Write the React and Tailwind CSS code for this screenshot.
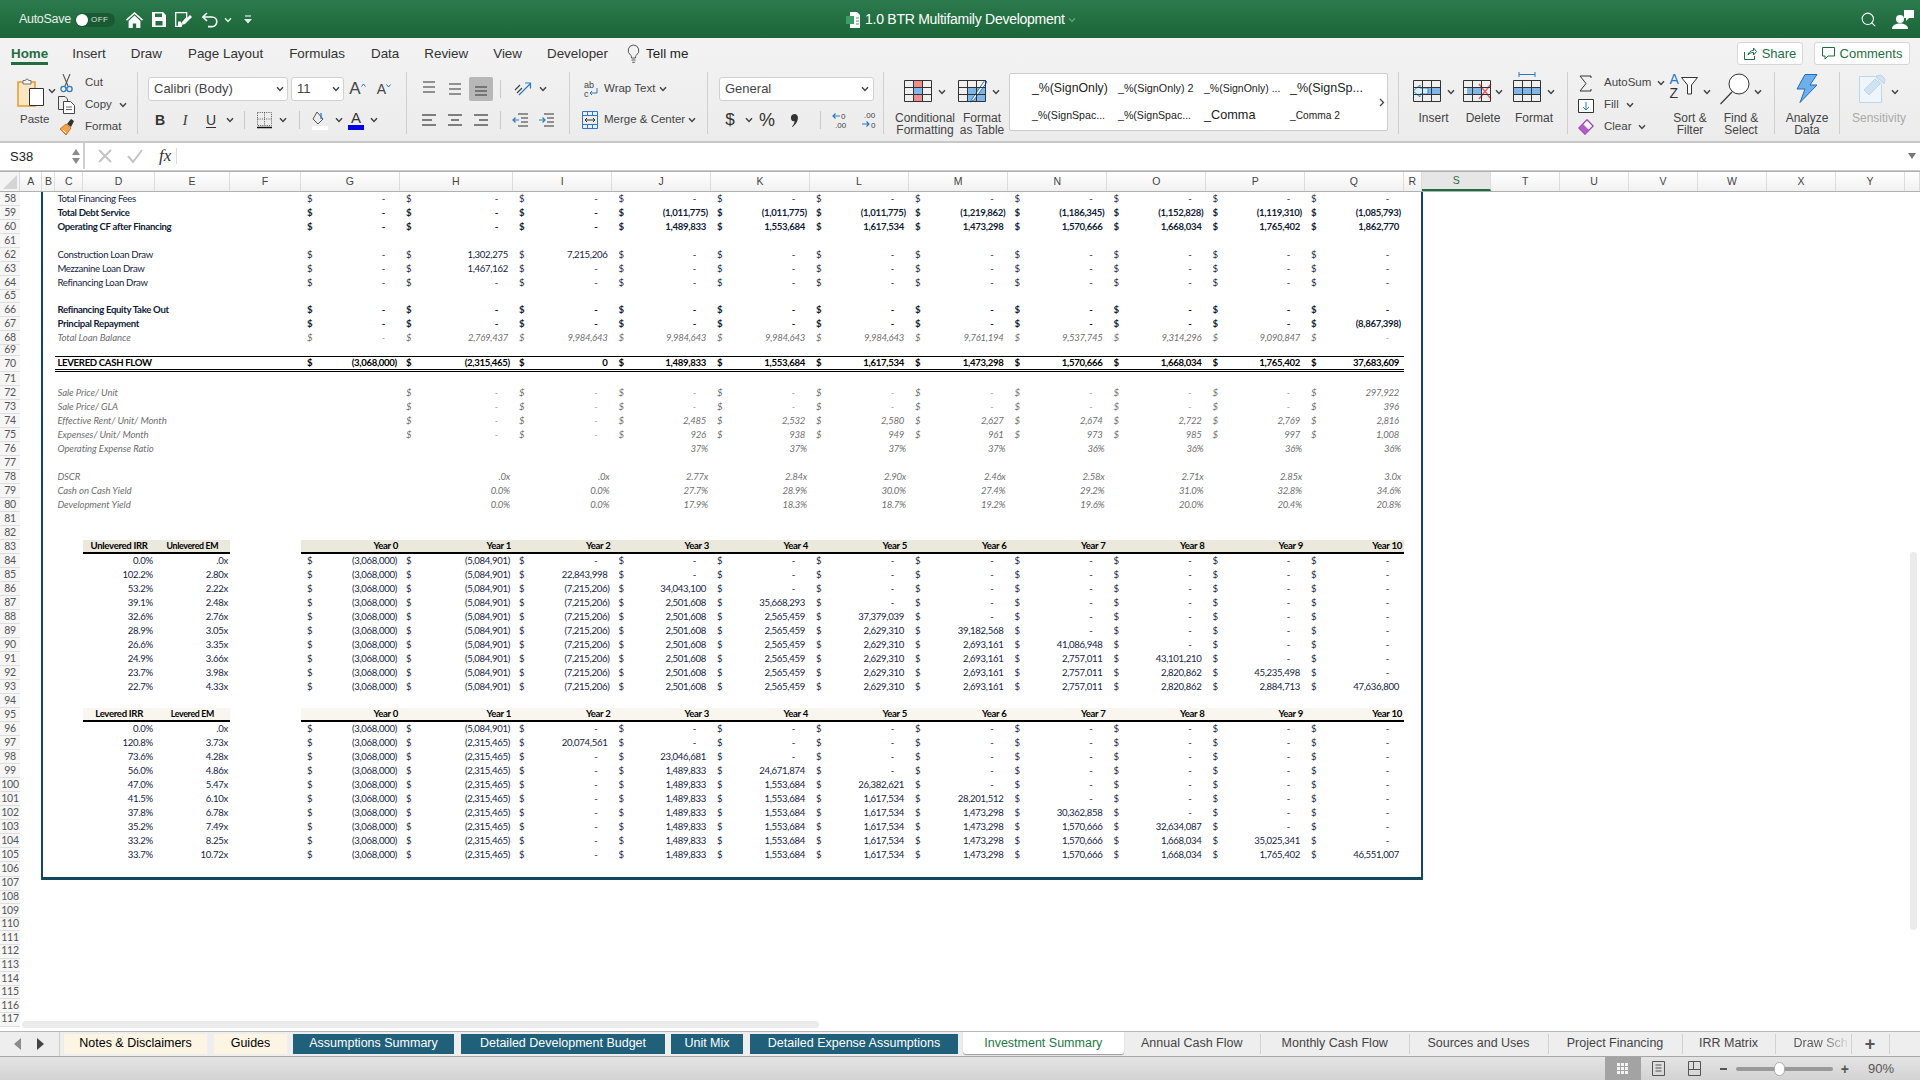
import { Search } from "lucide-react"

const ARIAL = "[font-family:'Liberation_Sans',Arial,sans-serif]"

function Chev({ className = "", stroke = "#444" }) {
  return (
    <svg width="8" height="6" viewBox="0 0 8 6" className={"shrink-0 " + className}>
      <path d="M1 1.2 4 4.4 7 1.2" fill="none" stroke={stroke} strokeWidth="1.5" />
    </svg>
  )
}

// fixed-width centered holder, the ribbon is a strict little grid
function Slot({ w, children, className = "" }) {
  return <span className={"flex shrink-0 items-center justify-center " + w + " " + className}>{children}</span>
}

function Sep({ className = "" }) {
  return <span className={"h-[18px] w-px shrink-0 bg-[#c9c9c9] " + className} />
}

function Lines({ rows, align = "left", stroke = "#333" }) {
  // rows: y positions, align: how the short lines sit
  return (
    <svg width="18" height="18" viewBox="0 0 18 18">
      {rows.map((y, i) => {
        const short = i % 2 === 1 && align !== "full"
        const x1 = short ? (align === "left" ? 2 : align === "center" ? 5 : 7) : 2
        const x2 = short ? (align === "left" ? 12 : align === "center" ? 13 : 16) : 16
        return <line key={y} x1={x1} x2={x2} y1={y} y2={y} stroke={stroke} strokeWidth="1.2" />
      })}
    </svg>
  )
}

function GridBase({ children, w = 28, h = 22, cols = 3, rows = 3 }) {
  const lines = []
  for (let i = 0; i <= cols; i++) {
    const x = 0.5 + ((w - 1) / cols) * i
    lines.push(<line key={"c" + i} x1={x} x2={x} y1={0.5} y2={h - 0.5} stroke="#333" strokeWidth="1" />)
  }
  for (let i = 0; i <= rows; i++) {
    const y = 0.5 + ((h - 1) / rows) * i
    lines.push(<line key={"r" + i} x1={0.5} x2={w - 0.5} y1={y} y2={y} stroke="#333" strokeWidth="1" />)
  }
  return (
    <svg width={w} height={h} viewBox={`0 0 ${w} ${h}`} className="shrink-0 overflow-visible">
      {children}
      {lines}
    </svg>
  )
}

function TitleBar() {
  return (
    <div className="flex h-[38px] shrink-0 items-center bg-gradient-to-b from-[#2b7a4d] to-[#1c6538] pt-px text-white">
      <span className={"ml-[19px] w-[50px] text-[12.5px] tracking-[-0.3px] text-[#e6efe9] " + ARIAL}>AutoSave</span>
      <span className="ml-[6px] flex h-[14px] w-[40px] items-center rounded-full bg-[#195a35] pl-px">
        <span className="h-[12px] w-[12px] rounded-full bg-white" />
        <span className={"ml-[3px] text-[8px] tracking-[0.5px] text-[#d6e4dc] " + ARIAL}>OFF</span>
      </span>
      <svg width="17" height="16" viewBox="0 0 17 16" className="ml-[11px]">
        <path d="M8.5 0 0 7.6l1 1.1L8.5 2l7.5 6.7 1-1.1ZM2.6 9v7h4.2v-4.6h3.4V16h4.2V9L8.5 3.6Z" fill="#fff" />
      </svg>
      <svg width="14" height="15" viewBox="0 0 14 15" className="ml-[9px]">
        <path d="M0 0h11l3 3v12H0Zm3 1.5V5h7V1.5ZM3.5 9v4.5h7V9Z" fill="#fff" fillRule="evenodd" />
      </svg>
      <svg width="18" height="15" viewBox="0 0 18 15" className="ml-[9px]">
        <path d="M.7.7h11v5L7 11l-.8 3.3H.7Z" fill="none" stroke="#fff" strokeWidth="1.3" />
        <path d="M3 9.5h3v4.5H3Z" fill="#fff" />
        <path d="m8 10 7-7 2 2-7 7-2.8.8Z" fill="#fff" />
      </svg>
      <svg width="17" height="16" viewBox="0 0 17 16" className="ml-[9px]">
        <path d="M5 1 1 5l4 4" fill="none" stroke="#fff" strokeWidth="1.6" />
        <path d="M1.5 5H10a4.8 4.8 0 0 1 0 9.6H6" fill="none" stroke="#fff" strokeWidth="1.6" />
      </svg>
      <Chev stroke="#e6efe9" className="ml-[5px]" />
      <svg width="8" height="9" viewBox="0 0 8 9" className="ml-[12px]">
        <path d="M1 1h6" stroke="#e6efe9" strokeWidth="1.2" />
        <path d="M0 4h8L4 8.5Z" fill="#e6efe9" />
      </svg>
      <svg width="14" height="16" viewBox="0 0 14 16" className="ml-[594px]">
        <path d="M4 0h7l3 3v13H4Z" fill="#fff" />
        <path d="M0 4h8v8H0Z" fill="#3f9b67" />
        <path d="M10 6h3M10 9h3M10 12h3" stroke="#3f9b67" />
      </svg>
      <span className={"ml-[5px] w-[199px] text-[14px] tracking-[-0.26px] whitespace-nowrap " + ARIAL}>1.0 BTR Multifamily Development</span>
      <Chev stroke="#5f9d7b" className="ml-[4px]" />
      <Search size={17} strokeWidth={1.5} className="ml-[784px]" />
      <svg width="22" height="20" viewBox="0 0 22 20" className="ml-[15px]">
        <circle cx="8" cy="9" r="4" fill="#fff" />
        <path d="M0 19c0-4 4-5.5 8-5.5s8 1.500 8 5.500Z" fill="#fff" />
        <path d="M12 0h10v8h-5l-3 3V8h-2Z" fill="#fff" />
      </svg>
    </div>
  )
}

const TABS = [
  ["Insert", "ml-[24px]"],
  ["Draw", "ml-[25px]"],
  ["Page Layout", "ml-[26px]"],
  ["Formulas", "ml-[26px]"],
  ["Data", "ml-[26px]"],
  ["Review", "ml-[25px]"],
  ["View", "ml-[25px]"],
  ["Developer", "ml-[25px]"],
]

function TabRow() {
  return (
    <div className={"flex h-[34px] items-start text-[13.4px] text-[#333] " + ARIAL}>
      <span className="ml-[11px] mt-[8px] border-b-[3px] border-[#1e6e42] font-bold leading-[16px] text-[#1e6e42]">Home</span>
      {TABS.map(([t, m]) => (
        <span key={t} className={"mt-[8px] leading-[16px] " + m}>{t}</span>
      ))}
      <svg width="13" height="20" viewBox="0 0 13 20" className="ml-[19px] mt-[6px]">
        <path d="M6.500 1a5.500 5.500 0 0 0-3 10c.7.6 1 1.500 1 3h4c0-1.500.3-2.400 1-3a5.500 5.500 0 0 0-3-10ZM4.500 16h4M5.200 18.300h2.600" fill="none" stroke="#555" />
      </svg>
      <span className="ml-[6px] mt-[8px] leading-[16px] text-[#222]">Tell me</span>
      <div className="ml-auto mr-[10px] mt-[4px] flex gap-[11px]">
        <button className="flex h-[23px] w-[66px] items-center justify-center gap-[5px] rounded-[3px] border border-[#d6d6d6] bg-white text-[13px] text-[#1e6e42]">
          <svg width="13" height="13" viewBox="0 0 13 13">
            <path d="M.5 5v7.500h10V9M4 8c.5-3 3-4.500 5.500-4.500V1l3 3.500-3 3.500V5.500C7 5.500 5 6.500 4 8Z" fill="none" stroke="#1e6e42" />
          </svg>
          Share
        </button>
        <button className="flex h-[23px] w-[96px] items-center justify-center gap-[5px] rounded-[3px] border border-[#d6d6d6] bg-white text-[13px] text-[#1e6e42]">
          <svg width="13" height="13" viewBox="0 0 13 13">
            <path d="M.5.500h12v8.500H6l-3 3V9H.5Z" fill="none" stroke="#1e6e42" />
          </svg>
          Comments
        </button>
      </div>
    </div>
  )
}

function Clipboard() {
  return (
    <div className="flex w-[138px] shrink-0 border-r border-[#cfcfcf] pl-[17px]">
      <div className="flex w-[41px] flex-col">
        <div className="mt-[5px] flex h-[34px] items-start">
          <svg width="28" height="30" viewBox="0 0 28 30">
            <path d="M1 5h17v24H1Z" fill="#fbe6c2" stroke="#e39a37" strokeWidth="1.500" />
            <path d="M6 3.500h2.500a1.500 1.500 0 0 1 3 0H14V7H6Z" fill="#f5f5f5" stroke="#777" />
            <path d="M12.500 11.500h14v17h-14Z" fill="#fff" stroke="#333" />
          </svg>
          <Chev className="ml-[3px] mt-[11px]" />
        </div>
        <span className="ml-[3px] mt-[1px] text-[11.5px] leading-[14px]">Paste</span>
      </div>
      <div className="flex flex-col text-[11.5px]">
        <div className="flex h-[22px] shrink-0 items-center">
          <Slot w="w-[27px]" className="justify-start pl-[2px]">
            <svg width="13" height="19" viewBox="0 0 13 19">
              <path d="M3 0 8 12M10 0 5 12" stroke="#555" strokeWidth="1.100" />
              <circle cx="3.500" cy="15" r="2.600" fill="none" stroke="#2a78c6" strokeWidth="1.300" />
              <circle cx="9.500" cy="15" r="2.600" fill="none" stroke="#2a78c6" strokeWidth="1.300" />
            </svg>
          </Slot>
          <span>Cut</span>
        </div>
        <div className="flex h-[22px] shrink-0 items-center">
          <Slot w="w-[27px]" className="justify-start">
            <svg width="17" height="18" viewBox="0 0 17 18">
              <path d="M5 13.500H.5V.5H7l2.500 2.500V5" fill="none" stroke="#444" />
              <path d="M5.500 5.500h7l4 4v8h-11Z" fill="#fff" stroke="#444" />
              <path d="M8 11h6M8 13.500h6" stroke="#666" />
            </svg>
          </Slot>
          <span>Copy</span>
          <Chev className="ml-[7px]" />
        </div>
        <div className="flex h-[22px] shrink-0 items-center">
          <Slot w="w-[27px]" className="justify-start pl-px">
            <svg width="16" height="18" viewBox="0 0 16 18">
              <path d="M7 6 1 11l6 6 5-7Z" fill="#f4a24a" stroke="#d4722a" />
              <path d="m8 6 4-5 3 2-3 6Z" fill="#333" />
              <path d="M4 12l3 3" stroke="#fff" />
            </svg>
          </Slot>
          <span>Format</span>
        </div>
      </div>
    </div>
  )
}

function FontGroup() {
  return (
    <div className="flex w-[269px] shrink-0 flex-col border-r border-[#cfcfcf] pl-[10px]">
      <div className="mt-[5px] flex h-[24px] items-center">
        <span className="flex h-[24px] w-[140px] items-center justify-between rounded-[3px] border border-[#d0d0d0] bg-white pl-[5px] pr-[3px] text-[13px]">
          Calibri (Body) <Chev />
        </span>
        <span className="ml-[3px] flex h-[24px] w-[53px] items-center justify-between rounded-[3px] border border-[#d0d0d0] bg-white pl-[5px] pr-[3px] text-[13px]">
          11 <Chev />
        </span>
        <Slot w="w-[25px]" className="ml-[1px] text-[17px]">
          A<svg width="5" height="4" viewBox="0 0 5 4" className="mb-[8px]"><path d="m.5 3.500 2-2.500 2 2.500" fill="none" stroke="#2a78c6" /></svg>
        </Slot>
        <Slot w="w-[28px]" className="text-[14px]">
          A<svg width="5" height="4" viewBox="0 0 5 4" className="mb-[7px]"><path d="m.5.500 2 2.500 2-2.500" fill="none" stroke="#2a78c6" /></svg>
        </Slot>
      </div>
      <div className="mt-[7px] flex h-[24px] items-center text-[14px] text-[#333]">
        <Slot w="w-[24px]" className="font-bold">B</Slot>
        <Slot w="w-[26px]" className="italic [font-family:'Liberation_Serif',serif]">I</Slot>
        <Slot w="w-[26px]" className="underline underline-offset-2">U</Slot>
        <Slot w="w-[12px]"><Chev /></Slot>
        <Sep className="ml-[8px]" />
        <Slot w="w-[39px]">
          <svg width="15" height="18" viewBox="0 0 15 18">
            <path d="M.5 1.500h14v13H.5ZM7.500 1.500v13M.5 8h14" fill="none" stroke="#555" strokeDasharray="1 1.200" />
            <path d="M0 16.500h15" stroke="#111" strokeWidth="1.500" />
          </svg>
        </Slot>
        <Slot w="w-[0px]" className="-ml-[1px]"><Chev /></Slot>
        <Sep className="ml-[16px]" />
        <Slot w="w-[39px]">
          <svg width="16" height="19" viewBox="0 0 16 19">
            <path d="M5 1 11 8 6 13 1 8Z" fill="none" stroke="#555" />
            <path d="M9 2v6" stroke="#2a78c6" strokeWidth="1.300" />
            <path d="M0 15h16v4H0Z" fill="#fff" />
          </svg>
        </Slot>
        <Slot w="w-[0px]"><Chev /></Slot>
        <Slot w="w-[36px]" className="ml-[-1px] flex-col text-[15px] leading-[15px]">
          A<span className="h-[5px] w-[16px] bg-[#0000e6]" />
        </Slot>
        <Slot w="w-[0px]"><Chev /></Slot>
      </div>
    </div>
  )
}

function AlignGroup() {
  const top = [4, 9, 14]
  return (
    <div className="flex w-[163px] shrink-0 flex-col border-r border-[#cfcfcf] pl-[9px]">
      <div className="mt-[5px] flex h-[24px] items-center">
        <Slot w="w-[26px]">
          <svg width="18" height="18" viewBox="0 0 18 18"><path d="M3 2h12M3 7h12M3 12h12" stroke="#333" strokeWidth="1.100" /></svg>
        </Slot>
        <Slot w="w-[26px]">
          <svg width="18" height="18" viewBox="0 0 18 18"><path d="M3 4h12M3 9h12M3 14h12" stroke="#333" strokeWidth="1.100" /></svg>
        </Slot>
        <Slot w="w-[24px]" className="ml-[1px] h-[24px] rounded-[2px] bg-[#b7b7b7]">
          <svg width="18" height="18" viewBox="0 0 18 18"><path d="M3 7h12M3 11h12M3 15h12" stroke="#333" strokeWidth="1.100" /></svg>
        </Slot>
        <Sep className="ml-[7px]" />
        <Slot w="w-[33px]" className="ml-[5px]">
          <svg width="18" height="18" viewBox="0 0 18 18">
            <path d="M1 10c2-2 3-3 5-5M3 13c2-2 3-3 5-5" stroke="#444" strokeWidth="1.200" fill="none" />
            <path d="M5 15 16 4M11 3h5.500v5.500" stroke="#2a78c6" strokeWidth="1.200" fill="none" />
          </svg>
        </Slot>
        <Chev />
      </div>
      <div className="mt-[7px] flex h-[24px] items-center">
        <Slot w="w-[26px]"><Lines rows={top} align="left" /></Slot>
        <Slot w="w-[26px]"><Lines rows={top} align="center" /></Slot>
        <Slot w="w-[26px]"><Lines rows={top} align="right" /></Slot>
        <Sep className="ml-[6px]" />
        <Slot w="w-[26px]" className="ml-[6px]">
          <svg width="16" height="16" viewBox="0 0 16 16">
            <path d="M6 2h10M9 6h7M9 10h7M6 14h10" stroke="#333" />
            <path d="M7 8H1M3.500 5.500 1 8l2.500 2.500" stroke="#2a78c6" strokeWidth="1.200" fill="none" />
          </svg>
        </Slot>
        <Slot w="w-[26px]">
          <svg width="16" height="16" viewBox="0 0 16 16">
            <path d="M6 2h10M9 6h7M9 10h7M6 14h10" stroke="#333" />
            <path d="M1 8h6M4.500 5.500 7 8l-2.500 2.500" stroke="#2a78c6" strokeWidth="1.200" fill="none" />
          </svg>
        </Slot>
      </div>
    </div>
  )
}

function WrapGroup() {
  return (
    <div className="flex w-[138px] shrink-0 flex-col border-r border-[#cfcfcf] pl-[11px] text-[11.5px]">
      <div className="mt-[5px] flex h-[24px] items-center">
        <Slot w="w-[23px]" className="pr-[4px]">
          <svg width="14" height="18" viewBox="0 0 14 18">
            <text x="0" y="8" fontSize="9" fill="#444" fontFamily="Liberation Sans">ab</text>
            <text x="0" y="17" fontSize="9" fill="#444" fontFamily="Liberation Sans">c</text>
            <path d="M13 8v5H6M8 11 6 13l2 2" stroke="#2a78c6" fill="none" />
          </svg>
        </Slot>
        <span className="w-[50px] whitespace-nowrap">Wrap Text</span>
        <Chev className="ml-[5px]" />
      </div>
      <div className="mt-[7px] flex h-[24px] items-center">
        <Slot w="w-[23px]" className="pr-[6px]">
          <svg width="16" height="18" viewBox="0 0 16 18">
            <path d="M.5.500h15v17H.5ZM.5 4.500h15M.5 13.500h15M5.500.500v4M10.500.500v4M5.500 13.500v4M10.500 13.500v4" fill="none" stroke="#2a78c6" />
            <path d="M3 9h10M5 7 3 9l2 2M11 7l2 2-2 2" fill="none" stroke="#333" />
          </svg>
        </Slot>
        <span className="w-[79px] whitespace-nowrap">Merge &amp; Center</span>
        <Chev className="ml-[5px]" />
      </div>
    </div>
  )
}

function NumberGroup() {
  return (
    <div className="flex w-[176px] shrink-0 flex-col border-r border-[#cfcfcf] pl-[11px]">
      <span className="mt-[5px] flex h-[24px] w-[155px] items-center justify-between rounded-[3px] border border-[#d0d0d0] bg-white pl-[5px] pr-[4px] text-[13px]">
        General <Chev />
      </span>
      <div className="mt-[7px] flex h-[24px] items-center text-[16px] text-[#333]">
        <Slot w="w-[22px]" className="text-[17px]">$</Slot>
        <Slot w="w-[15px]"><Chev /></Slot>
        <Slot w="w-[22px]" className="text-[18px]">%</Slot>
        <Slot w="w-[32px]">
          <svg width="7" height="13" viewBox="0 0 7 13"><path d="M3.500 0a3.400 3.400 0 0 1 3.400 3.800C6.900 8 4 11 1.500 13L1 12.400C2.500 10.800 3.400 9.200 3.600 7.300A3.600 3.600 0 0 1 3.500 0Z" fill="#333" /></svg>
        </Slot>
        <Sep className="ml-[10px]" />
        <Slot w="w-[38px]">
          <svg width="16" height="20" viewBox="0 0 16 20">
            <path d="M8 6H1M3.500 3.500 1 6l2.500 2.500" fill="none" stroke="#2a78c6" strokeWidth="1.200" />
            <text x="9" y="9" fontSize="8" fill="#444" fontFamily="Liberation Sans">0</text>
            <text x="3" y="18" fontSize="8" fill="#444" fontFamily="Liberation Sans">.00</text>
          </svg>
        </Slot>
        <Slot w="w-[20px]">
          <svg width="16" height="20" viewBox="0 0 16 20">
            <text x="3" y="8" fontSize="8" fill="#444" fontFamily="Liberation Sans">.00</text>
            <path d="M1 14h7M5.500 11.500 8 14l-2.500 2.500" fill="none" stroke="#2a78c6" strokeWidth="1.200" />
            <text x="10" y="18" fontSize="8" fill="#444" fontFamily="Liberation Sans">0</text>
          </svg>
        </Slot>
      </div>
    </div>
  )
}

function BigCol({ w, icon, label, chevMl = "ml-[6px]", chev = true, className = "" }) {
  return (
    <div className={"flex shrink-0 flex-col items-center " + w + " " + className}>
      <div className="flex h-[40px] shrink-0 items-end pb-[10px]">
        {icon}
        {chev && <Chev className={"mb-[7px] " + chevMl} />}
      </div>
      <span className="whitespace-pre text-center text-[12px] leading-[12px]">{label}</span>
    </div>
  )
}

const STYLES = [
  ["_%(SignOnly)", "text-[12.3px]"],
  ["_%(SignOnly) 2", "text-[10.8px]"],
  ["_%(SignOnly) ...", "text-[10.5px]"],
  ["_%(SignSp...", "text-[12.5px]"],
  ["_%(SignSpac...", "text-[10.6px]"],
  ["_%(SignSpac...", "text-[10.6px]"],
  ["_Comma", "text-[12.7px]"],
  ["_Comma 2", "text-[10.2px]"],
]

function StylesGroup() {
  return (
    <div className="flex w-[515px] shrink-0 border-r border-[#cfcfcf] pl-[5px]">
      <BigCol
        w="w-[72px]"
        label={"Conditional\nFormatting"}
        chevMl="ml-[6px]"
        icon={
          <GridBase>
            <path d="M9.500 .5h9v7h-9ZM9.500 14.500h9v7h-9Z" fill="#f58c8c" />
            <path d="M9.500 7.500h9v7h-9Z" fill="#7fb8e8" />
          </GridBase>
        }
      />
      <BigCol
        w="w-[42px]"
        label={"Format\nas Table"}
        chevMl="ml-[6px]"
        icon={
          <div className="ml-[-6px]">
            <GridBase>
              <path d="M9.500 7.500h18v14h-18Z" fill="#7fb8e8" />
              <path d="M27 0 14 19l-2 3 4-2 13-18Z" fill="#f2f6fa" stroke="#2a78c6" />
            </GridBase>
          </div>
        }
      />
      <div className="ml-[6px] mt-[1px] flex h-[58px] w-[379px] items-center rounded-[2px] border border-[#cccccc] bg-white pl-[22px] text-[#222]">
        <div className="grid w-[344px] grid-cols-[86px_86px_86px_86px] grid-rows-[27px_27px]">
          {STYLES.map(([t, size], i) => (
            <span key={i} className={"flex items-center whitespace-nowrap " + size}>{t}</span>
          ))}
        </div>
        <svg width="6" height="9" viewBox="0 0 6 9" className="ml-[3px]"><path d="m1 1 3.500 3.500L1 8" fill="none" stroke="#444" strokeWidth="1.300" /></svg>
      </div>
    </div>
  )
}

function CellsGroup() {
  return (
    <div className="flex w-[169px] shrink-0 border-r border-[#cfcfcf] pl-[10px]">
      <BigCol
        w="w-[49px]"
        label="Insert"
        icon={
          <GridBase>
            <path d="M8 7.500h19v7H8Z" fill="#7fb8e8" />
            <path d="M0 11 7 5v3h8v6H7v3Z" fill="#d8ecfa" stroke="#2a8be0" />
          </GridBase>
        }
      />
      <BigCol
        w="w-[50px]"
        label="Delete"
        chevMl="ml-[4px]"
        icon={
          <GridBase>
            <path d="M4 7.500h15v7H4Z" fill="#7fb8e8" />
            <path d="m16 4 12 15M28 4 16 19" stroke="#ef5a5a" strokeWidth="1.400" />
          </GridBase>
        }
      />
      <BigCol
        w="w-[52px]"
        label="Format"
        icon={
          <div className="flex flex-col items-stretch">
            <svg width="28" height="5" viewBox="0 0 28 5" className="mb-[3px]"><path d="M6 2.500h16M6 0v5M22 0v5" stroke="#2a78c6" /></svg>
            <GridBase>
              <path d="M.5 7.500h27v7H.5Z" fill="#7fb8e8" />
            </GridBase>
          </div>
        }
      />
    </div>
  )
}

function EditingGroup() {
  return (
    <div className="flex w-[207px] shrink-0 border-r border-[#cfcfcf]">
      <div className="flex w-[97px] shrink-0 flex-col pl-[10px] text-[11.5px]">
        <div className="flex h-[22px] shrink-0 items-center">
          <Slot w="w-[26px]" className="justify-start">
            <svg width="16" height="17" viewBox="0 0 16 17"><path d="M13 3V1H2l6 7.500L2 16h11v-2" fill="none" stroke="#333" /></svg>
          </Slot>
          <span>AutoSum</span>
          <Chev className="ml-[6px]" />
        </div>
        <div className="flex h-[22px] shrink-0 items-center">
          <Slot w="w-[26px]" className="justify-start">
            <svg width="16" height="16" viewBox="0 0 16 16">
              <path d="M.5 2.500h15v13H.5Z" fill="#fff" stroke="#333" />
              <path d="M8 5v8M5 10l3 3 3-3" fill="none" stroke="#2a78c6" />
            </svg>
          </Slot>
          <span>Fill</span>
          <Chev className="ml-[7px]" />
        </div>
        <div className="flex h-[22px] shrink-0 items-center">
          <Slot w="w-[26px]" className="justify-start">
            <svg width="16" height="16" viewBox="0 0 16 16">
              <path d="M9 .8 15.200 7 7 15.200.8 9Z" fill="#fff" stroke="#9a3fb0" strokeWidth="1.300" />
              <path d="M5 5 1 9l6 6 4-4Z" fill="#b65cc9" />
            </svg>
          </Slot>
          <span>Clear</span>
          <Chev className="ml-[7px]" />
        </div>
      </div>
      <BigCol
        w="w-[52px]"
        label={"Sort &\nFilter"}
        chevMl="ml-[5px]"
        className="ml-[-1px]"
        icon={
          <div className="relative flex h-[28px] w-[28px]">
            <span className="absolute left-0 top-[-2px] text-[14px] leading-[14px] text-[#2a78c6]">A</span>
            <span className="absolute left-0 top-[12px] text-[14px] leading-[14px] text-[#333]">Z</span>
            <svg width="17" height="18" viewBox="0 0 17 18" className="absolute left-[11px] top-[3px]"><path d="M.5.500h16L10.500 8v9h-4V8Z" fill="#fff" stroke="#333" /></svg>
          </div>
        }
      />
      <BigCol
        w="w-[52px]"
        label={"Find &\nSelect"}
        chevMl="ml-[4px]"
        className="ml-[-1px]"
        icon={
          <svg width="30" height="33" viewBox="0 0 30 33" className="mb-[-4px]">
            <circle cx="19" cy="11" r="10" fill="#fff" stroke="#333" />
            <path d="M12 19 .5 31" stroke="#333" strokeWidth="1.100" />
          </svg>
        }
      />
    </div>
  )
}

function Ribbon() {
  return (
    <div className={"flex h-[105px] shrink-0 flex-col border-b-2 border-[#c8c8c8] bg-gradient-to-b from-[#f3f3f3] to-[#ececec] text-[#444] " + ARIAL}>
      <TabRow />
      <div className="flex h-[62px]">
        <Clipboard />
        <FontGroup />
        <AlignGroup />
        <WrapGroup />
        <NumberGroup />
        <StylesGroup />
        <CellsGroup />
        <EditingGroup />
        <div className="w-[65px] shrink-0 border-r border-[#cfcfcf]">
          <BigCol
            w="w-[64px]"
            label={"Analyze\nData"}
            chev={false}
            icon={
              <svg width="22" height="29" viewBox="0 0 22 29" className="mb-[-1px]">
                <path d="M9 .5h12L14 11h7L4 28.500 9 15H1Z" fill="#6db0ea" stroke="#1e6cc0" />
              </svg>
            }
          />
        </div>
        <BigCol
          w="w-[78px]"
          label="Sensitivity"
          chevMl="ml-[5px]"
          className="text-[#aaa]"
          icon={
            <svg width="27" height="29" viewBox="0 0 27 29" className="mb-[-1px]">
              <path d="M.5 2.500h16l6 8v18H.5Z" fill="#eef5fb" stroke="#bcd6ea" />
              <path d="m5 16 11-11 5 5-11 11Z" fill="#cfe3f3" stroke="#bcd6ea" />
              <path d="m17 2 5-1 4 4-1 5Z" fill="#cfe3f3" stroke="#bcd6ea" />
            </svg>
          }
        />
      </div>
    </div>
  )
}

function FormulaBar() {
  return (
    <div className={"flex h-[26px] shrink-0 items-center bg-white " + ARIAL}>
      <div className="flex h-full w-[85px] items-center justify-between border-r-2 border-[#cfcfcf] pl-[10px] pr-[3px] pt-px text-[13px] text-[#222]">
        S38
        <span className="flex flex-col gap-[3px]">
          <span className="h-0 w-0 border-x-[4px] border-b-[6px] border-x-transparent border-b-[#8a8a8a]" />
          <span className="h-0 w-0 border-x-[4px] border-t-[6px] border-x-transparent border-t-[#8a8a8a]" />
        </span>
      </div>
      <svg width="14" height="14" viewBox="0 0 14 14" className="ml-[13px]"><path d="m1 1 12 12M13 1 1 13" stroke="#c4c4c4" strokeWidth="2" /></svg>
      <svg width="16" height="14" viewBox="0 0 16 14" className="ml-[15px]"><path d="m1 7 5 6 9-12" fill="none" stroke="#c4c4c4" strokeWidth="2" /></svg>
      <span className="ml-[16px] text-[17px] italic text-[#333] [font-family:'Liberation_Serif',serif]">fx</span>
      <span className="ml-[5px] h-[16px] w-px bg-[#dcdcdc]" />
      <span className="ml-auto mr-[4px] h-0 w-0 border-x-[4px] border-t-[6px] border-x-transparent border-t-[#777]" />
    </div>
  )
}

const COLS = ["A", "B", "C", "D", "E", "F", "G", "H", "I", "J", "K", "L", "M", "N", "O", "P", "Q", "R", "S", "T", "U", "V", "W", "X", "Y", ""]

function ColumnHeader() {
  return (
    <div className={"grid h-[21px] shrink-0 grid-cols-[20px_22.4px_13px_28px_71.5px_75px_71px_99px_113px_99.5px_98.5px_99px_99px_99.5px_99px_99px_98.5px_99px_18px_69.5px_68.6px_69px_69px_69px_69px_69px_1fr] border-y border-y-[#b0b0b0] bg-gradient-to-b from-white to-[#f1f1f1] text-[10.5px] text-[#444] " + ARIAL}>
      <div className="relative border-r border-[#d8d8d8] bg-[#f4f4f4]">
        <span className="absolute bottom-[2px] right-[2px] h-0 w-0 border-b-[14px] border-l-[14px] border-b-[#d4d4d4] border-l-transparent" />
      </div>
      {COLS.map((c, i) => (
        <div
          key={i}
          className={
            "flex items-center justify-center border-r border-[#dddddd] " +
            (c === "S" ? "border-b-2 border-b-[#1e6e42] bg-[#e6e6e6] text-[#1e6e42]" : "")
          }
        >
          {c}
        </div>
      ))}
    </div>
  )
}

const NAVY = "text-[#16243f]"

function pad(v) {
  if (v === "-") return "pr-[15px]"
  if (/[)%x]$/.test(v)) return "pr-[3px]"
  return "pr-[5px]"
}

function Money({ v, dollar = true }) {
  if (v === null) return <div />
  return (
    <div className="flex justify-between whitespace-nowrap pl-[6px]">
      {dollar ? <span>$</span> : <span />}
      <span className={pad(v)}>{v}</span>
    </div>
  )
}

const YEARS = ["Year 0", "Year 1", "Year 2", "Year 3", "Year 4", "Year 5", "Year 6", "Year 7", "Year 8", "Year 9", "Year 10"]

const blanks = (n) => Array(n).fill(null)
const dashes = (n) => Array(n).fill("-")

const UNLEV = ["(3,068,000)", "(5,084,901)", "(7,215,206)", "2,501,608", "2,565,459", "2,629,310", "2,693,161", "2,757,011", "2,820,862", "2,884,713"]
const LEV = ["(3,068,000)", "(2,315,465)", "-", "1,489,833", "1,553,684", "1,617,534", "1,473,298", "1,570,666", "1,668,034", "1,765,402"]

// cash flows up to the exit year, dashes after it
function flows(base, exit, amount) {
  return Array.from({ length: 11 }, (_, i) => (i < exit ? base[i] : i === exit ? amount : "-"))
}

const IRR_U = [
  ["102.2%", "2.80x", 2, "22,843,998"],
  ["53.2%", "2.22x", 3, "34,043,100"],
  ["39.1%", "2.48x", 4, "35,668,293"],
  ["32.6%", "2.76x", 5, "37,379,039"],
  ["28.9%", "3.05x", 6, "39,182,568"],
  ["26.6%", "3.35x", 7, "41,086,948"],
  ["24.9%", "3.66x", 8, "43,101,210"],
  ["23.7%", "3.98x", 9, "45,235,498"],
  ["22.7%", "4.33x", 10, "47,636,800"],
]

const IRR_L = [
  ["120.8%", "3.73x", 2, "20,074,561"],
  ["73.6%", "4.28x", 3, "23,046,681"],
  ["56.0%", "4.86x", 4, "24,671,874"],
  ["47.0%", "5.47x", 5, "26,382,621"],
  ["41.5%", "6.10x", 6, "28,201,512"],
  ["37.8%", "6.78x", 7, "30,362,858"],
  ["35.2%", "7.49x", 8, "32,634,087"],
  ["33.2%", "8.25x", 9, "35,025,341"],
  ["33.7%", "10.72x", 10, "46,551,007"],
]

const zeroRow = ["(3,068,000)", "(5,084,901)", ...dashes(9)]

const SHEET = [
  { n: 58, label: "Total Financing Fees", vals: dashes(11) },
  { n: 59, label: "Total Debt Service", kind: "bold", vals: ["-", "-", "-", "(1,011,775)", "(1,011,775)", "(1,011,775)", "(1,219,862)", "(1,186,345)", "(1,152,828)", "(1,119,310)", "(1,085,793)"] },
  { n: 60, label: "Operating CF after Financing", kind: "bold", vals: ["-", "-", "-", "1,489,833", "1,553,684", "1,617,534", "1,473,298", "1,570,666", "1,668,034", "1,765,402", "1,862,770"] },
  { n: 61 },
  { n: 62, label: "Construction Loan Draw", vals: ["-", "1,302,275", "7,215,206", ...dashes(8)] },
  { n: 63, label: "Mezzanine Loan Draw", vals: ["-", "1,467,162", ...dashes(9)] },
  { n: 64, label: "Refinancing Loan Draw", vals: dashes(11) },
  { n: 65, h: "h-[13px]" },
  { n: 66, label: "Refinancing Equity Take Out", kind: "bold", vals: dashes(11) },
  { n: 67, label: "Principal Repayment", kind: "bold", vals: [...dashes(10), "(8,867,398)"] },
  { n: 68, label: "Total Loan Balance", kind: "ital", vals: ["-", "2,769,437", "9,984,643", "9,984,643", "9,984,643", "9,984,643", "9,761,194", "9,537,745", "9,314,296", "9,090,847", "-"] },
  { n: 69, h: "h-[11px]" },
  { n: 70, h: "h-[16px]", label: "LEVERED CASH FLOW", kind: "total", vals: ["(3,068,000)", "(2,315,465)", "0", "1,489,833", "1,553,684", "1,617,534", "1,473,298", "1,570,666", "1,668,034", "1,765,402", "37,683,609"] },
  { n: 71 },
  { n: 72, label: "Sale Price/ Unit", kind: "ital", vals: [null, ...dashes(9), "297,922"] },
  { n: 73, label: "Sale Price/ GLA", kind: "ital", vals: [null, ...dashes(9), "396"] },
  { n: 74, label: "Effective Rent/ Unit/ Month", kind: "ital", vals: [null, "-", "-", "2,485", "2,532", "2,580", "2,627", "2,674", "2,722", "2,769", "2,816"] },
  { n: 75, label: "Expenses/ Unit/ Month", kind: "ital", vals: [null, "-", "-", "926", "938", "949", "961", "973", "985", "997", "1,008"] },
  { n: 76, label: "Operating Expense Ratio", kind: "ital", plain: true, vals: [...blanks(3), "37%", "37%", "37%", "37%", "36%", "36%", "36%", "36%"] },
  { n: 77 },
  { n: 78, label: "DSCR", kind: "ital", plain: true, vals: [null, ".0x", ".0x", "2.77x", "2.84x", "2.90x", "2.46x", "2.58x", "2.71x", "2.85x", "3.0x"] },
  { n: 79, label: "Cash on Cash Yield", kind: "ital", plain: true, vals: [null, "0.0%", "0.0%", "27.7%", "28.9%", "30.0%", "27.4%", "29.2%", "31.0%", "32.8%", "34.6%"] },
  { n: 80, label: "Development Yield", kind: "ital", plain: true, vals: [null, "0.0%", "0.0%", "17.9%", "18.3%", "18.7%", "19.2%", "19.6%", "20.0%", "20.4%", "20.8%"] },
  { n: 81 },
  { n: 82 },
  { n: 83, head: ["Unlevered IRR", "Unlevered EM"], bg: "bg-[#ebe8dc]" },
  { n: 84, irr: ["0.0%", ".0x"], vals: zeroRow },
  ...IRR_U.map(([a, b, exit, amt], i) => ({ n: 85 + i, irr: [a, b], vals: flows(UNLEV, exit, amt) })),
  { n: 94 },
  { n: 95, head: ["Levered IRR", "Levered EM"], bg: "bg-[#f9f6ef]" },
  { n: 96, irr: ["0.0%", ".0x"], vals: zeroRow },
  ...IRR_L.map(([a, b, exit, amt], i) => ({ n: 97 + i, irr: [a, b], vals: flows(LEV, exit, amt) })),
  { n: 106, h: "h-[15px]" },
]

const ROWGRID = "grid-cols-[12.4px_28px_71.5px_75px_71px_99px_113px_99.5px_98.5px_99px_99px_99.5px_99px_99px_98.5px_99px_17.1px]"

function SheetRow({ row }) {
  const { h = "h-[14px]", label, kind, vals, plain, head, irr, bg } = row
  if (head) {
    return (
      <div className={"grid grid-rows-[14px] " + ROWGRID + " " + h + " font-bold text-black"}>
        <div className="col-start-3 col-span-2 grid grid-cols-subgrid">
          <div className={"flex items-center justify-center border-b-2 border-black pb-[1px] " + bg}>{head[0]}</div>
          <div className={"flex items-center justify-center border-b-2 border-black pb-[1px] text-[8.8px] " + bg}>{head[1]}</div>
        </div>
        <div className={"col-start-6 col-span-11 grid grid-cols-subgrid border-b-2 border-black " + bg}>
          {YEARS.map((y) => (
            <div key={y} className="flex items-center justify-end pb-[1px] pr-[2px]">{y}</div>
          ))}
        </div>
      </div>
    )
  }
  if (irr) {
    return (
      <div className={"grid items-center " + ROWGRID + " " + h + " " + NAVY}>
        <div className="col-start-3 pr-[2px] text-right">{irr[0]}</div>
        <div className="pr-[2px] text-right">{irr[1]}</div>
        <div />
        {vals.map((v, i) => (
          <Money key={i} v={v} />
        ))}
      </div>
    )
  }
  if (kind === "total") {
    return (
      <div className={"grid " + ROWGRID + " " + h + " font-bold text-black"}>
        <div className="col-start-2 col-span-15 grid grid-cols-subgrid items-center border-t border-b-[3px] border-black [border-bottom-style:double]">
          <div className="col-span-4 whitespace-nowrap pl-[2px]">{label}</div>
          {vals.map((v, i) => (
            <Money key={i} v={v} />
          ))}
        </div>
      </div>
    )
  }
  const tone = kind === "ital" ? "italic text-[#6f6f6f]" : kind === "bold" ? "font-bold text-[#101c36]" : NAVY
  return (
    <div className={"grid items-center " + ROWGRID + " " + h + " " + tone}>
      {label && (
        <div className={"col-start-2 col-span-4 whitespace-nowrap pl-[2px] " + (kind === "ital" ? "tracking-[-0.08px]" : "")}>{label}</div>
      )}
      {vals && vals.map((v, i) => <Money key={i} v={v} dollar={!plain} />)}
    </div>
  )
}

const AFTER = [107, 108, 109, 110, 111, 112, 113, 114, 115, 116, 117]

const SHEET_TABS = [
  ["Notes & Disclaimers", "w-[143px] bg-[#fdf5e3] text-black", "ml-[4px]"],
  ["Guides", "w-[73px] bg-[#fdf5e3] text-black", "ml-[7px]"],
  ["Assumptions Summary", "w-[161px] bg-[#20607a] text-white", "ml-[6px]"],
  ["Detailed Development Budget", "w-[204px] bg-[#20607a] text-white", "ml-[7px]"],
  ["Unit Mix", "w-[72px] bg-[#20607a] text-white", "ml-[6px]"],
  ["Detailed Expense Assumptions", "w-[208px] bg-[#20607a] text-white", "ml-[7px]"],
]

const PLAIN_TABS = [
  ["Annual Cash Flow", "w-[137.5px]"],
  ["Monthly Cash Flow", "w-[148.5px]"],
  ["Sources and Uses", "w-[139px]"],
  ["Project Financing", "w-[134px]"],
  ["IRR Matrix", "w-[93px]"],
]

function SheetTabs() {
  return (
    <div className={"flex h-[26px] shrink-0 border-y border-t-[#b8b8b8] border-b-[#a6a6a6] bg-[#eeeeee] text-[12.5px] " + ARIAL}>
      <div className="flex w-[60px] shrink-0 items-center border-r border-[#d0d0d0] pl-[14px]">
        <span className="h-0 w-0 border-y-[6px] border-r-[7px] border-y-transparent border-r-[#8c8c8c]" />
        <span className="ml-[16px] h-0 w-0 border-y-[6px] border-l-[7px] border-y-transparent border-l-[#444]" />
      </div>
      {SHEET_TABS.map(([t, cls, m]) => (
        <div key={t} className={"mt-[2px] flex h-[20px] shrink-0 items-center justify-center pb-px " + cls + " " + m}>{t}</div>
      ))}
      <div className="ml-[5px] flex h-[22px] w-[160.5px] shrink-0 items-center justify-center rounded-b-[3px] bg-white text-[#1e7a45] shadow-[0_1px_1px_rgba(0,0,0,0.35)]">Investment Summary</div>
      {PLAIN_TABS.map(([t, w]) => (
        <div key={t} className={"my-[2px] flex shrink-0 items-center justify-center border-r border-[#d2d2d2] pb-px text-[#444] " + w}>{t}</div>
      ))}
      <div className="my-[2px] flex w-[76px] shrink-0 items-center border-r border-[#d2d2d2] pb-px pl-[18px]">
        <span className="w-[54px] overflow-hidden whitespace-nowrap bg-gradient-to-r from-[#555] from-50% to-[#dddddd] bg-clip-text text-transparent">Draw Sch</span>
      </div>
      <div className="my-[2px] flex w-[38px] shrink-0 items-center justify-center border-r border-[#d2d2d2] text-[18px] font-bold text-[#555]">+</div>
    </div>
  )
}

function StatusBar() {
  return (
    <div className={"flex h-[23px] shrink-0 items-stretch justify-end bg-gradient-to-b from-[#e4e4e4] to-[#d3d3d3] " + ARIAL}>
      <Slot w="w-[36px]" className="bg-[#a3a3a3]">
        <svg width="13" height="13" viewBox="0 0 13 13"><path d="M.5.500h12v12H.5ZM.5 4.500h12M.5 8.500h12M4.500.5v12M8.500.5v12" fill="#f4f4f4" stroke="#a3a3a3" /></svg>
      </Slot>
      <Slot w="w-[36px]">
        <svg width="13" height="15" viewBox="0 0 13 15"><path d="M.5.500h12v14H.5ZM3.500 4h6M3.500 7h6M3.500 10h6" fill="none" stroke="#555" /></svg>
      </Slot>
      <Slot w="w-[36px]">
        <svg width="13" height="15" viewBox="0 0 13 15"><path d="M.5.500h12v14H.5ZM.5 8.500h12M5.500.5v8" fill="none" stroke="#555" /></svg>
      </Slot>
      <div className="ml-[7px] flex w-[129px] items-center text-[#555]">
        <span className="h-[2px] w-[7px] bg-[#555]" />
        <div className="ml-[9px] flex h-[4px] w-[97px] items-center rounded-full bg-[#999999]">
          <span className="ml-[38px] h-[14px] w-[11px] rounded-full border border-[#aaa] bg-white" />
        </div>
        <span className="ml-[8px] text-[14px] font-bold leading-none">+</span>
      </div>
      <span className="ml-[19px] mr-[26px] flex items-center text-[13px] text-[#555]">90%</span>
    </div>
  )
}

export default function App() {
  return (
    <div className="flex h-[1080px] w-[1920px] flex-col overflow-hidden bg-white">
      <TitleBar />
      <Ribbon />
      <FormulaBar />
      <div className="mt-[1px] h-[1px] shrink-0 bg-[#cccccc]" />
      <ColumnHeader />
      <div className="relative flex min-h-0 flex-1 overflow-hidden">
        <div className="w-[20px] shrink-0 text-[10.5px] tracking-[-0.3px] text-[#555] [font-family:Lato,sans-serif]">
          {SHEET.map((r) => (
            <div key={r.n} className={"flex items-center justify-center border-b border-[#dedede] bg-[#f6f6f6] " + (r.h || "h-[14px]")}>{r.n}</div>
          ))}
          {AFTER.map((n) => (
            <div key={n} className="flex h-[13.6px] items-center justify-center border-b border-[#dedede] bg-[#f6f6f6]">{n}</div>
          ))}
        </div>
        <div className="ml-[21px] h-fit w-[1382px] border-x-2 border-b-[3px] border-[#12485c] text-[9.6px] leading-[10px] tracking-[-0.32px] [font-family:Lato,sans-serif]">
          {SHEET.map((r) => (
            <SheetRow key={r.n} row={r} />
          ))}
        </div>
        {/* overlay scrollbars */}
        <span className="absolute bottom-[3px] left-[22px] h-[7px] w-[797px] rounded-full bg-[#ebebeb]" />
        <span className="absolute right-[3px] top-[360px] h-[378px] w-[7px] rounded-full bg-[#ebebeb]" />
      </div>
      <SheetTabs />
      <StatusBar />
    </div>
  )
}
